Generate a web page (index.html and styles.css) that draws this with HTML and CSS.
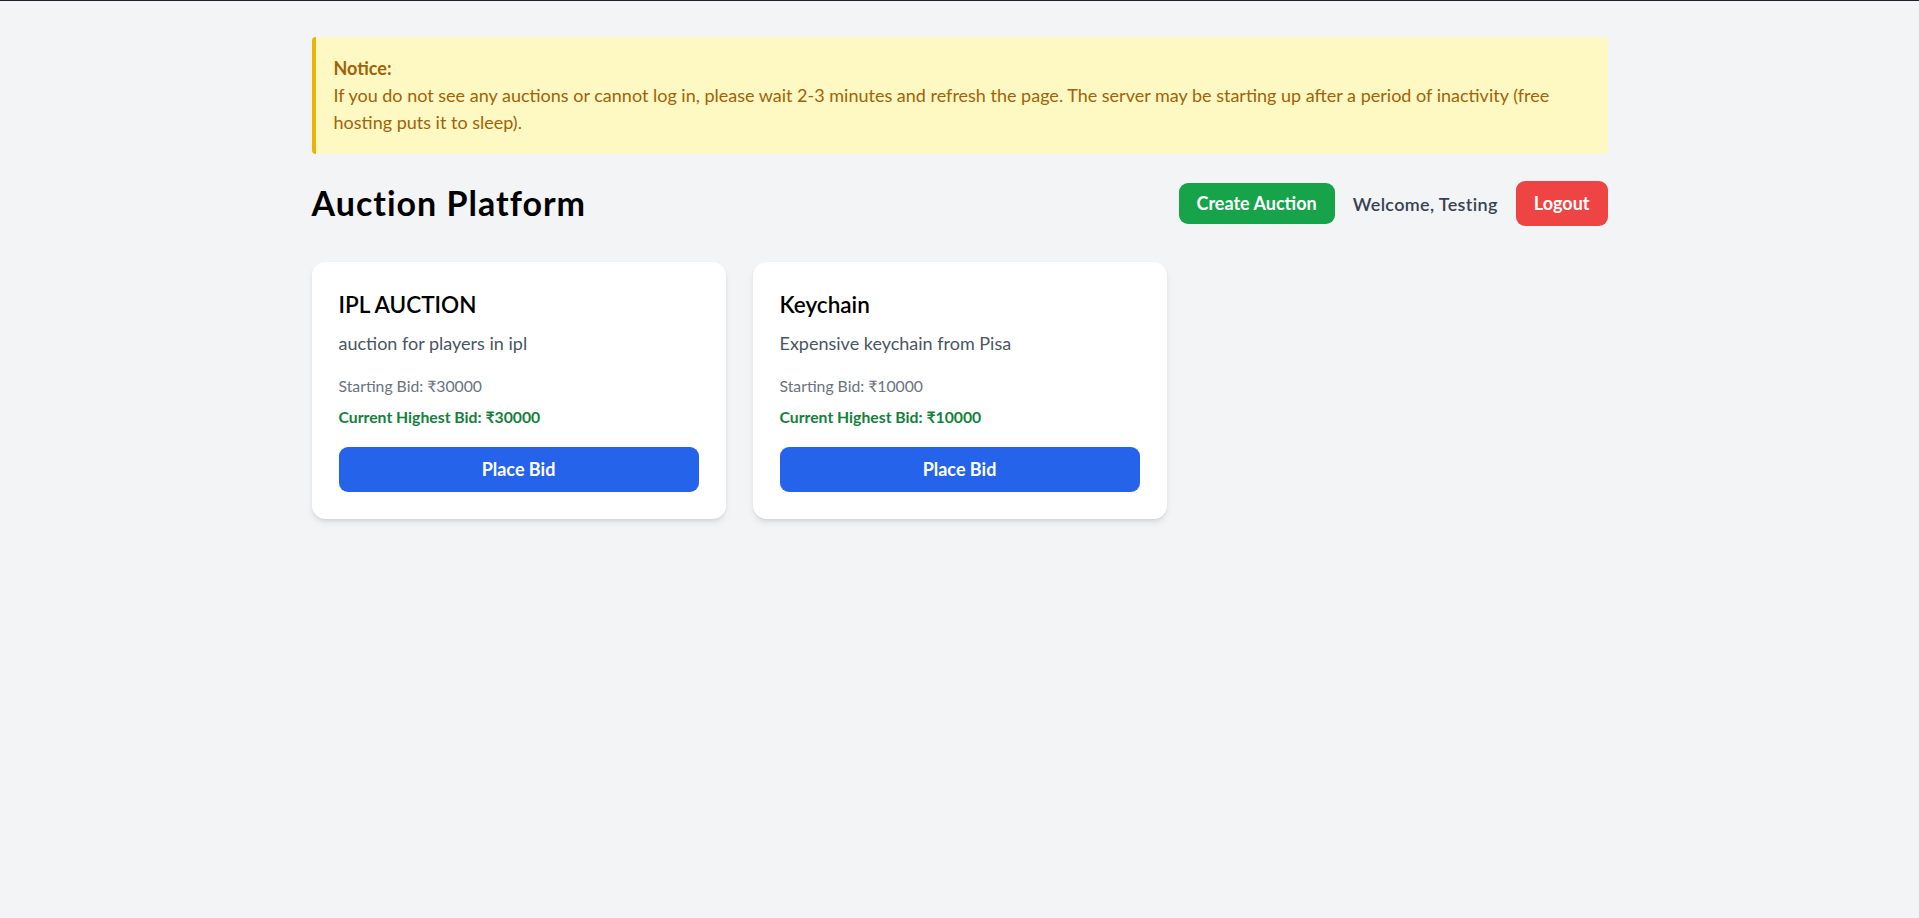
FILE: index.html
```html
<!DOCTYPE html>
<html lang="en">
<head>
<meta charset="utf-8">
<title>Auction Platform</title>
<link rel="stylesheet" href="styles.css">
</head>
<body>
<div class="page">
  <div class="notice">
    <p class="notice-title">Notice:</p>
    <p class="notice-text">If you do not see any auctions or cannot log in, please wait 2-3 minutes and refresh the page. The server may be starting up after a period of inactivity (free hosting puts it to sleep).</p>
  </div>
  <header class="header">
    <h1 class="title">Auction Platform</h1>
    <div class="actions">
      <button class="btn btn-green">Create Auction</button>
      <span class="welcome">Welcome, Testing</span>
      <button class="btn btn-red">Logout</button>
    </div>
  </header>
  <div class="grid">
    <div class="card">
      <h2 class="card-title">IPL AUCTION</h2>
      <p class="card-desc">auction for players in ipl</p>
      <p class="card-start">Starting Bid: ₹30000</p>
      <p class="card-current">Current Highest Bid: ₹30000</p>
      <button class="btn-bid">Place Bid</button>
    </div>
    <div class="card">
      <h2 class="card-title">Keychain</h2>
      <p class="card-desc">Expensive keychain from Pisa</p>
      <p class="card-start">Starting Bid: ₹10000</p>
      <p class="card-current">Current Highest Bid: ₹10000</p>
      <button class="btn-bid">Place Bid</button>
    </div>
  </div>
</div>
</body>
</html>
```
FILE: styles.css
```css
* { box-sizing: border-box; }
html, body { margin: 0; padding: 0; }
body {
  background: #f3f4f6;
  border-top: 1px solid #202124;
  font-family: "Lato", "Liberation Sans", sans-serif;
  color: #000;
  min-height: 918px;
}
p, h1, h2 { margin: 0; }
.page {
  max-width: 1296px;
  margin: 0 auto;
  padding-top: 36px;
}
.notice {
  background: #fef9c3;
  border-left: 4px solid #eab308;
  border-radius: 4px;
  padding: 18px;
  color: #a16207;
  font-size: 18px;
  line-height: 27px;
  margin-bottom: 27px;
}
.notice-title { font-weight: 700; }
.header {
  display: flex;
  justify-content: space-between;
  align-items: center;
  margin-bottom: 36px;
}
.title {
  font-size: 34px;
  line-height: 40.5px;
  font-weight: 700;
  letter-spacing: 1px;
}
.actions {
  display: flex;
  align-items: center;
  gap: 18px;
}
.btn {
  border: 0;
  color: #fff;
  font-family: inherit;
  font-size: 18px;
  font-weight: 700;
  padding: 9px 18px;
  border-radius: 9px;
}
.btn-green { background: #16a34a; line-height: 23px; }
.btn-red { background: #ef4444; line-height: 27px; }
.welcome {
  color: #374151;
  font-size: 18px;
  font-weight: 600;
  letter-spacing: 0.35px;
}
.grid {
  display: grid;
  grid-template-columns: repeat(3, 1fr);
  gap: 27px;
}
.card {
  background: #fff;
  border-radius: 13.5px;
  padding: 27px;
  box-shadow: 0 4px 7px -1px rgba(0,0,0,0.1), 0 2px 4px -2px rgba(0,0,0,0.1);
}
.card-title {
  font-size: 22.5px;
  line-height: 31.5px;
  font-weight: 600;
  margin-bottom: 9px;
}
.card-desc {
  color: #4b5563;
  font-size: 18px;
  line-height: 27px;
  margin-bottom: 18px;
}
.card-start {
  color: #6b7280;
  font-size: 15.75px;
  line-height: 22.5px;
  margin-bottom: 9px;
}
.card-current {
  color: #15803d;
  font-size: 15.75px;
  line-height: 22.5px;
  font-weight: 700;
  margin-bottom: 18px;
}
.btn-bid {
  display: block;
  width: 100%;
  border: 0;
  background: #2563eb;
  color: #fff;
  font-family: inherit;
  font-size: 18px;
  line-height: 27px;
  font-weight: 700;
  padding: 9px 0;
  border-radius: 9px;
}
```
